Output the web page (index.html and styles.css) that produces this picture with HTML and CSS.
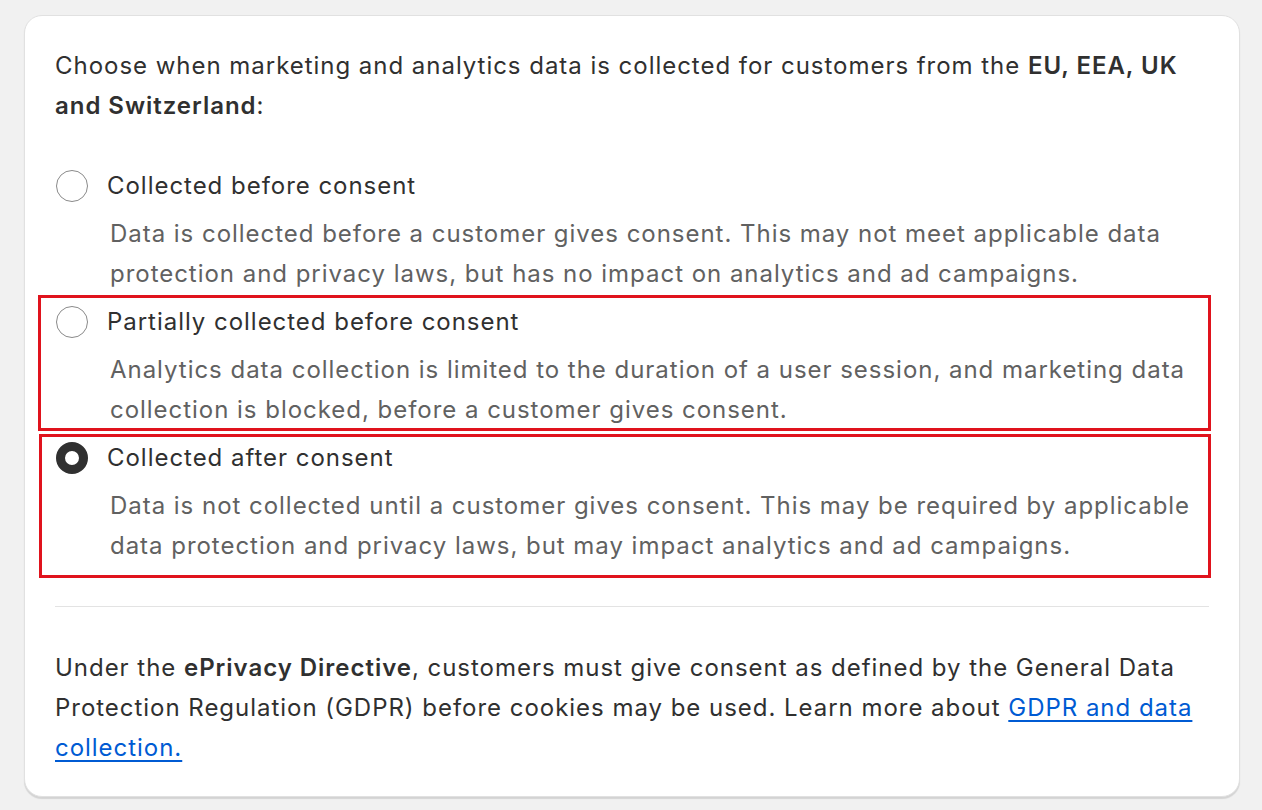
FILE: index.html
```html
<!DOCTYPE html>
<html lang="en">
<head>
<meta charset="utf-8">
<title>Data collection</title>
<link rel="stylesheet" href="styles.css">
</head>
<body>
<div class="card">
  <p class="intro">Choose when marketing and analytics data is collected for customers from the <strong>EU, EEA, UK and Switzerland</strong>:</p>
  <div class="options">
    <div class="option">
      <div class="row"><span class="radio"></span><span class="label">Collected before consent</span></div>
      <p class="desc">Data is collected before a customer gives consent. This may not meet applicable data protection and privacy laws, but has no impact on analytics and ad campaigns.</p>
    </div>
    <div class="option hl hl-a">
      <div class="row"><span class="radio"></span><span class="label">Partially collected before consent</span></div>
      <p class="desc">Analytics data collection is limited to the duration of a user session, and marketing data collection is blocked, before a customer gives consent.</p>
    </div>
    <div class="option hl hl-b">
      <div class="row"><span class="radio checked"></span><span class="label">Collected after consent</span></div>
      <p class="desc">Data is not collected until a customer gives consent. This may be required by applicable data protection and privacy laws, but may impact analytics and ad campaigns.</p>
    </div>
  </div>
  <hr class="divider">
  <p class="footer">Under the <strong>ePrivacy Directive</strong>, customers must give consent as defined by the General Data Protection Regulation (GDPR) before cookies may be used. Learn more about <a href="#">GDPR and data collection.</a></p>
</div>
</body>
</html>
```

FILE: styles.css
```css
html, body {
  margin: 0;
  padding: 0;
  background: #f1f1f1;
}
body {
  padding: 15px 22px 12px 24px;
  font-family: Inter, "Noto Sans", sans-serif;
  font-size: 24px;
  line-height: 40px;
  letter-spacing: 0.97px;
  color: #303030;
}
.card {
  background: #ffffff;
  border: 1px solid #e1e1e1;
  border-radius: 18px;
  box-shadow: 0 2px 1px rgba(0,0,0,0.12);
  padding: 30px 30px 28px 30px;
}
p { margin: 0; }
strong { font-weight: 600; }
.intro { margin-bottom: 40px; }
.options {
  display: flex;
  flex-direction: column;
  gap: 8px;
}
.option {
  position: relative;
  display: flex;
  flex-direction: column;
  gap: 8px;
}
.row {
  display: flex;
  align-items: center;
  gap: 19px;
}
.radio {
  width: 32px;
  height: 32px;
  box-sizing: border-box;
  border: 1.5px solid #8a8a8a;
  border-radius: 50%;
  flex: none;
  margin-left: 1px;
}
.radio.checked {
  border: 9px solid #303030;
}
.desc {
  padding-left: 55px;
  color: #616161;
}
.hl::after {
  content: "";
  position: absolute;
  border: 3px solid #e0131d;
  pointer-events: none;
}
.hl-a::after { top: -7px; bottom: -1px; left: -17px; right: -2px; }
.hl-b::after { top: -4px; bottom: -12px; left: -16px; right: -2px; }
.divider {
  border: 0;
  border-top: 1px solid #e3e3e3;
  margin: 40px 0 41px 0;
}
a {
  color: #005bd3;
  text-decoration: underline;
  text-underline-offset: 4px;
  text-decoration-thickness: 1.5px;
}
```
